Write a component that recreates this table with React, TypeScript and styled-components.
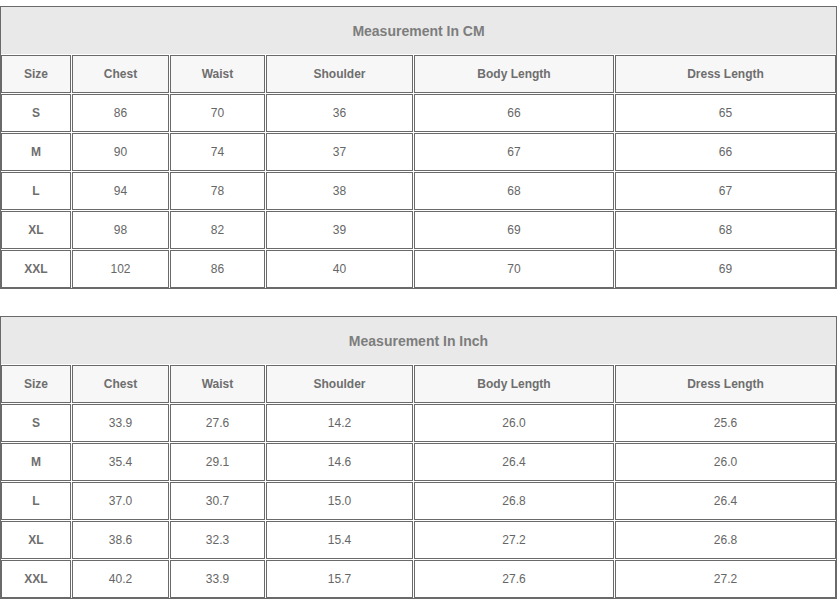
import React from 'react';
import styled, { createGlobalStyle } from 'styled-components';

interface SizeTable {
    title: string;
    rows: string[][];
}

const headers = ['Size', 'Chest', 'Waist', 'Shoulder', 'Body Length', 'Dress Length'];

const tables: SizeTable[] = [
    {
        title: 'Measurement In CM',
        rows: [
            ['S', '86', '70', '36', '66', '65'],
            ['M', '90', '74', '37', '67', '66'],
            ['L', '94', '78', '38', '68', '67'],
            ['XL', '98', '82', '39', '69', '68'],
            ['XXL', '102', '86', '40', '70', '69'],
        ],
    },
    {
        title: 'Measurement In Inch',
        rows: [
            ['S', '33.9', '27.6', '14.2', '26.0', '25.6'],
            ['M', '35.4', '29.1', '14.6', '26.4', '26.0'],
            ['L', '37.0', '30.7', '15.0', '26.8', '26.4'],
            ['XL', '38.6', '32.3', '15.4', '27.2', '26.8'],
            ['XXL', '40.2', '33.9', '15.7', '27.6', '27.2'],
        ],
    },
];

const GlobalStyle = createGlobalStyle`
    body {
        margin: 0;
        background: #ffffff;
        font-family: "Liberation Sans", Arial, sans-serif;
    }
`;

const Page = styled.div`
    display: flex;
    flex-direction: column;
    gap: 27px;
    padding-top: 6px;
    width: 837px;
`;

const Grid = styled.div`
    display: grid;
    grid-template-columns: 70px 97px 95px 147px 200px 221px;
    grid-template-rows: 47px repeat(6, 38px);
    gap: 1px;
    border: 1px solid #6a6a6a;
    background: #ffffff;
`;

const Title = styled.div`
    grid-column: 1 / -1;
    display: flex;
    align-items: center;
    justify-content: center;
    background: #e9e9e9;
    color: #7d7d7d;
    font-size: 14px;
    font-weight: bold;
`;

const Cell = styled.div<{ $head?: boolean; $bold?: boolean }>`
    display: flex;
    align-items: center;
    justify-content: center;
    border: 1px solid #6a6a6a;
    background: ${(p) => (p.$head ? '#f7f7f7' : '#ffffff')};
    color: ${(p) => (p.$head || p.$bold ? '#6e6e6e' : '#666666')};
    font-size: 12px;
    font-weight: ${(p) => (p.$head || p.$bold ? 'bold' : 'normal')};
`;

const Table: React.FC<SizeTable> = ({ title, rows }) => (
    <Grid>
        <Title>{title}</Title>
        {headers.map((h) => (
            <Cell key={h} $head>
                {h}
            </Cell>
        ))}
        {rows.map((row) =>
            row.map((v, i) => (
                <Cell key={row[0] + i} $bold={i === 0}>
                    {v}
                </Cell>
            ))
        )}
    </Grid>
);

export default function App() {
    return (
        <Page>
            <GlobalStyle />
            {tables.map((t) => (
                <Table key={t.title} {...t} />
            ))}
        </Page>
    );
}
